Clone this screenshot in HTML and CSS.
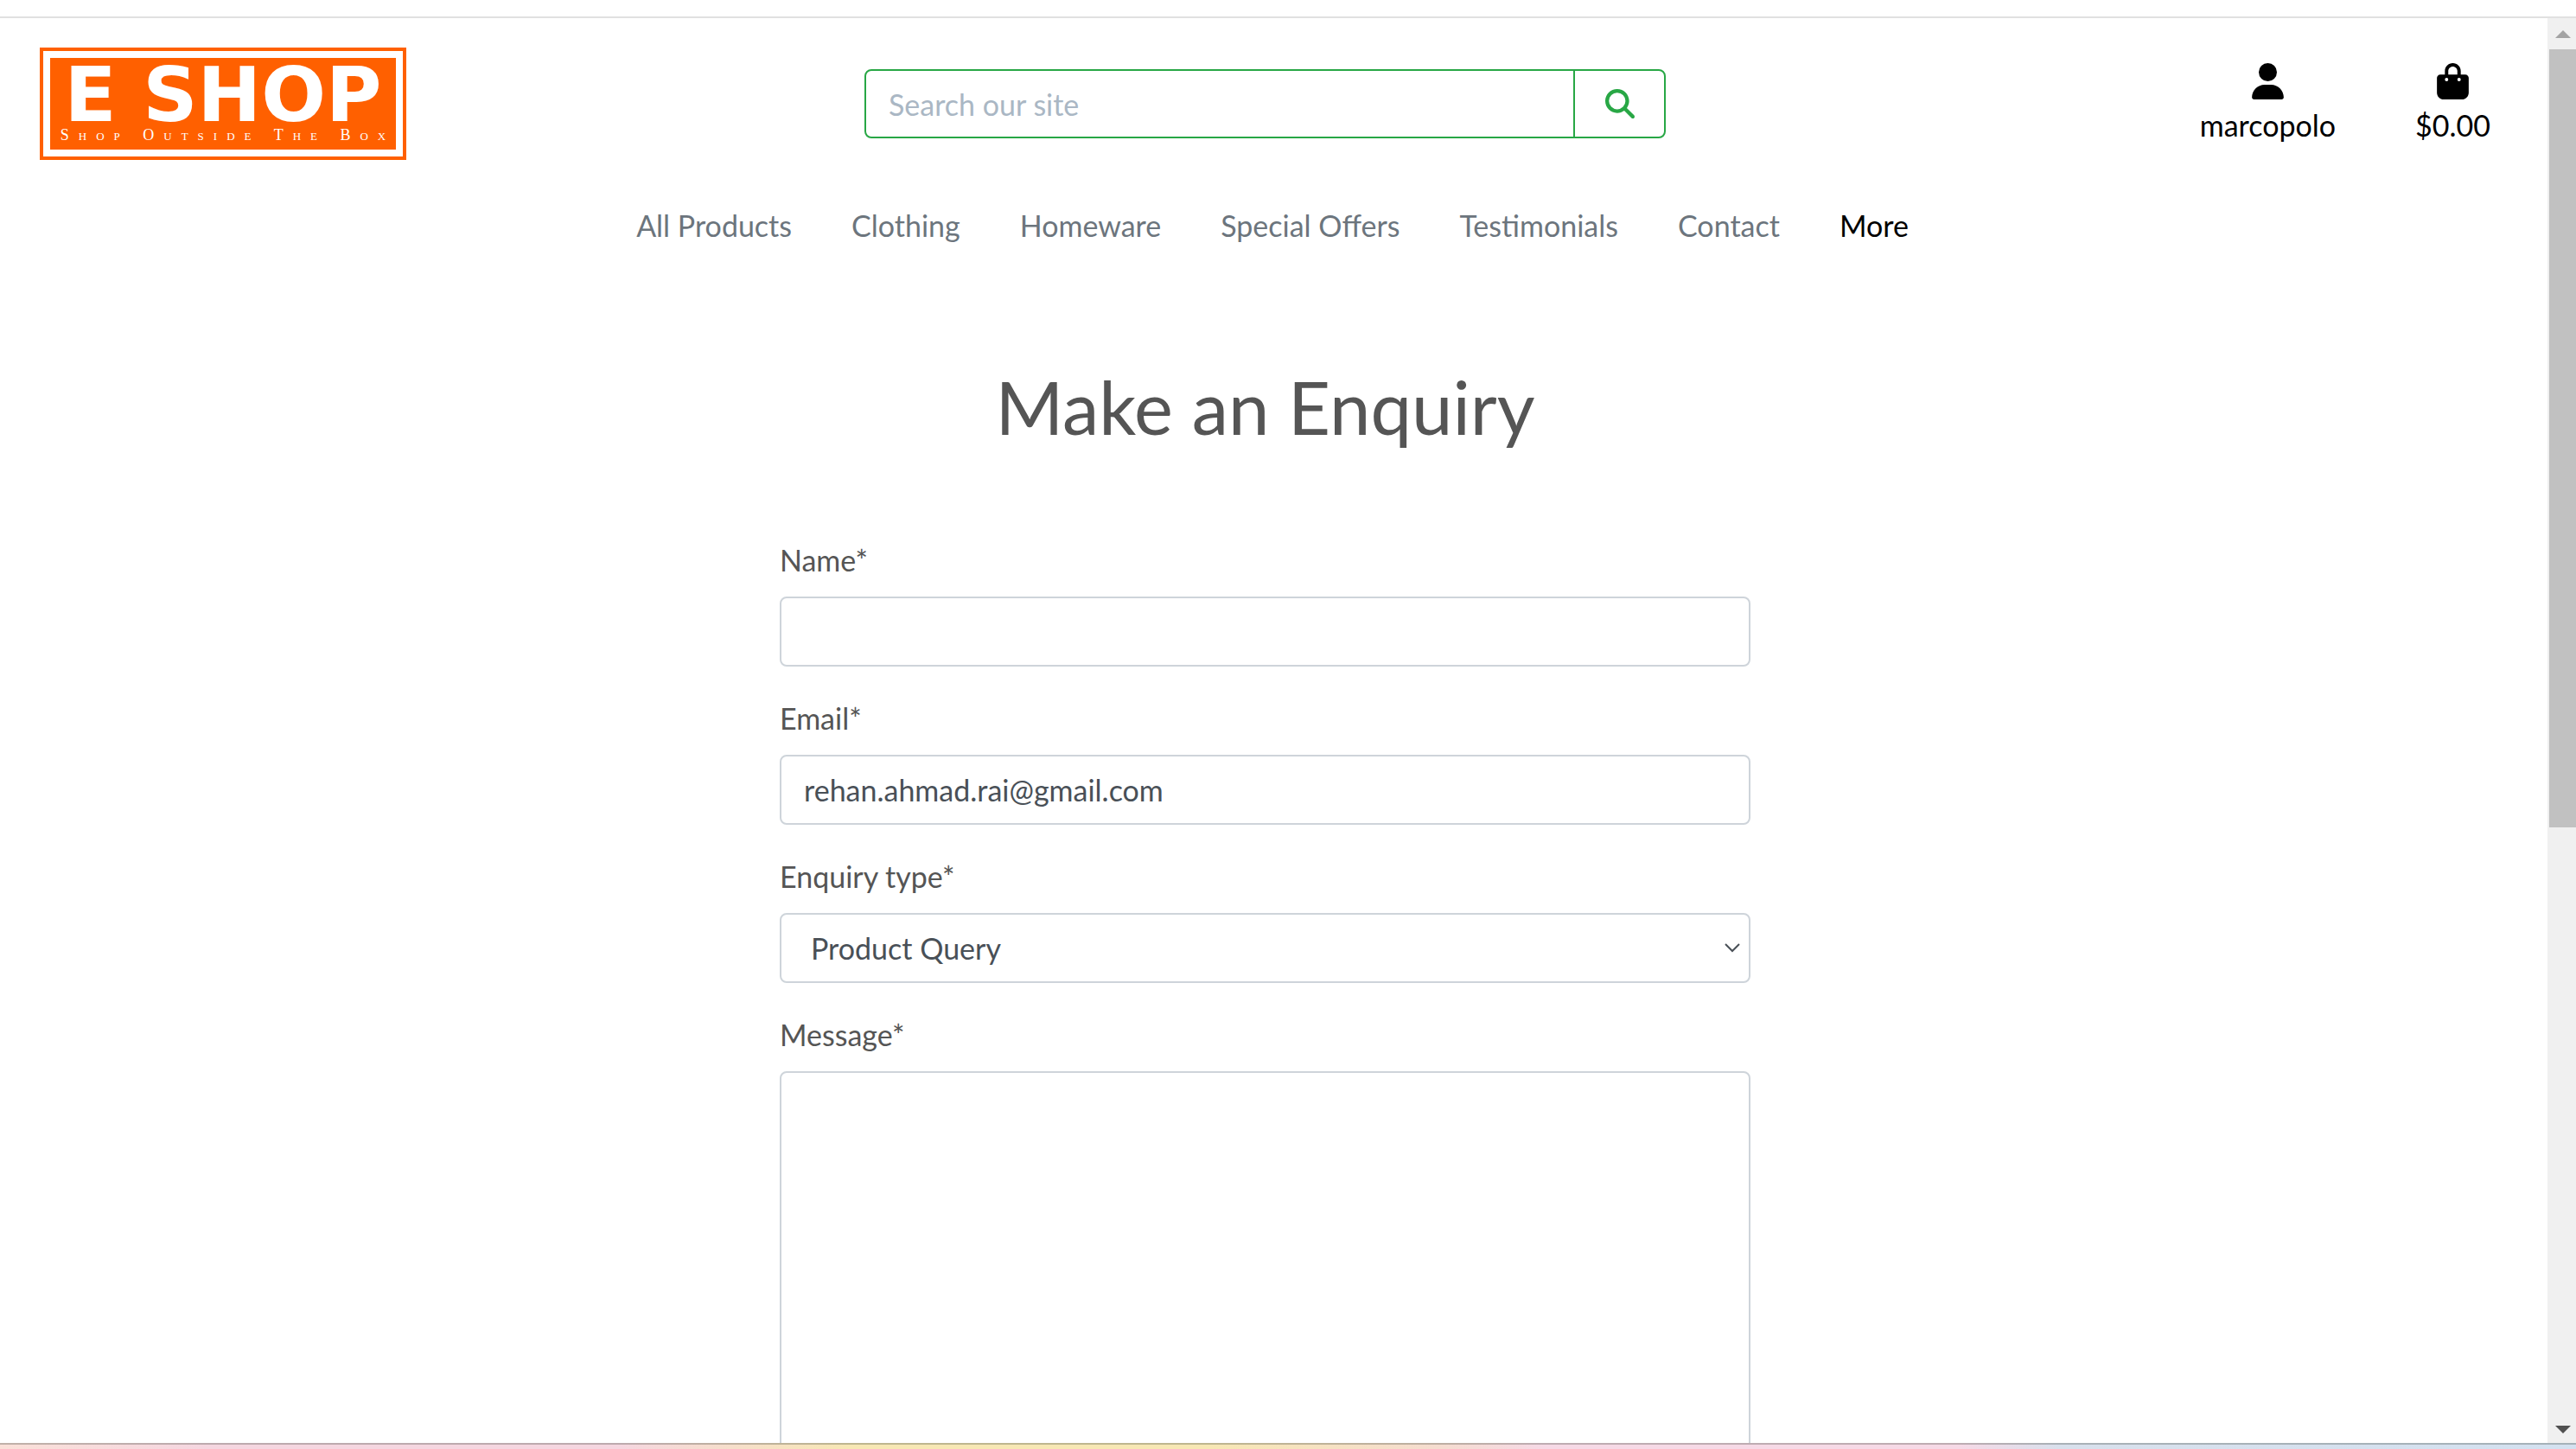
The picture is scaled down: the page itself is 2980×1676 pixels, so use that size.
FILE: index.html
```html
<!DOCTYPE html>
<html lang="en">
<head>
<meta charset="utf-8">
<title>E Shop - Make an Enquiry</title>
<link rel="stylesheet" href="styles.css">
</head>
<body>
<div class="topbar"></div>
<div class="window">
  <div class="page">
    <header class="header">
      <a class="logo" href="#">
        <span class="logo-panel">
          <span class="logo-name">E SHOP</span>
          <span class="logo-tagline">Shop Outside The Box</span>
        </span>
      </a>
      <form class="search" role="search">
        <input class="search-input" type="search" placeholder="Search our site" aria-label="Search our site">
        <button class="search-button" type="button" aria-label="Search">
          <svg class="search-icon" viewBox="0 0 512 512" fill="currentColor"><path d="M416 208c0 45.900-14.900 88.300-40 122.700L502.600 457.400c12.500 12.500 12.500 32.800 0 45.300s-32.800 12.500-45.300 0L330.700 376c-34.400 25.200-76.800 40-122.700 40C93.100 416 0 322.900 0 208S93.100 0 208 0S416 93.100 416 208zM208 352a144 144 0 1 0 0-288 144 144 0 1 0 0 288z"/></svg>
        </button>
      </form>
      <div class="account">
        <a class="account-link" href="#">
          <svg class="account-icon" viewBox="0 0 448 512" fill="currentColor"><path d="M224 256A128 128 0 1 0 224 0a128 128 0 1 0 0 256zm-45.700 48C79.800 304 0 383.800 0 482.300C0 498.700 13.300 512 29.700 512H418.300c16.400 0 29.700-13.300 29.700-29.700C448 383.800 368.200 304 269.700 304H178.300z"/></svg>
          <span>marcopolo</span>
        </a>
        <a class="account-link" href="#">
          <svg class="account-icon" viewBox="0 0 448 512" fill="currentColor"><path d="M160 112c0-35.300 28.700-64 64-64s64 28.700 64 64v48H160V112zm-48 48H48c-26.500 0-48 21.500-48 48V416c0 53 43 96 96 96H352c53 0 96-43 96-96V208c0-26.500-21.500-48-48-48H336V112C336 50.100 285.900 0 224 0S112 50.100 112 112v48zm24 48a24 24 0 1 1 0 48 24 24 0 1 1 0-48zm152 24a24 24 0 1 1 48 0 24 24 0 1 1-48 0z"/></svg>
          <span>$0.00</span>
        </a>
      </div>
    </header>
    <nav class="nav">
      <a href="#">All Products</a>
      <a href="#">Clothing</a>
      <a href="#">Homeware</a>
      <a href="#">Special Offers</a>
      <a href="#">Testimonials</a>
      <a href="#">Contact</a>
      <a class="nav-more" href="#">More</a>
    </nav>
    <main class="main">
      <h1 class="title">Make an Enquiry</h1>
      <form class="form">
        <div class="field">
          <label for="name">Name*</label>
          <input class="control" id="name" type="text">
        </div>
        <div class="field">
          <label for="email">Email*</label>
          <input class="control" id="email" type="email" value="rehan.ahmad.rai@gmail.com">
        </div>
        <div class="field">
          <label for="type">Enquiry type*</label>
          <div class="select">
            <select class="control" id="type"><option>Product Query</option></select>
            <svg class="chevron" viewBox="0 0 18 11" fill="none" stroke="currentColor" stroke-width="2"><path d="M1 1l8 8 8-8"/></svg>
          </div>
        </div>
        <div class="field">
          <label for="message">Message*</label>
          <textarea class="control" id="message" rows="10"></textarea>
        </div>
      </form>
    </main>
  </div>
  <div class="scrollbar" aria-hidden="true">
    <svg class="arrow arrow-up" viewBox="0 0 18 9"><path d="M0 9L9 0l9 9z"/></svg>
    <div class="track"><div class="thumb"></div></div>
    <svg class="arrow arrow-down" viewBox="0 0 18 9"><path d="M0 0l9 9 9-9z"/></svg>
  </div>
</div>
<div class="wallpaper"></div>
</body>
</html>
```
FILE: styles.css
```css
* {
  box-sizing: border-box;
}

body {
  margin: 0;
  height: 100vh;
  display: flex;
  flex-direction: column;
  overflow: hidden;
  background: #fff;
  color: #555;
  font: 34px/51px Lato, sans-serif;
}

a {
  color: inherit;
  text-decoration: none;
}

input,
select,
textarea,
button {
  font: inherit;
}

.topbar {
  flex: none;
  height: 21px;
  border-bottom: 2px solid #e1e1e1;
}

.window {
  flex: 1;
  min-height: 0;
  display: flex;
}

.page {
  flex: 1;
  min-width: 0;
  overflow: hidden;
  padding-right: 20px;
}

/* Header */

.header {
  display: grid;
  grid-template-columns: 1fr minmax(0, 927px) 1fr;
  align-items: center;
  padding: 34px 46px 0;
}

.logo {
  justify-self: start;
  padding: 8px;
  border: 4px solid #ff6000;
}

.logo-panel {
  display: flex;
  flex-direction: column;
  align-items: center;
  width: 400px;
  height: 106px;
  padding-top: 7px;
  background: #ff6000;
  color: #fff;
}

.logo-name {
  font: bold 88px/72px "DejaVu Sans", sans-serif;
  white-space: nowrap;
}

.logo-tagline {
  padding-left: 11px;
  font: 18px/20px "Liberation Serif", serif;
  font-variant: small-caps;
  letter-spacing: 11px;
  white-space: nowrap;
}

.search {
  display: flex;
  height: 80px;
  border: 2px solid #28a745;
  border-radius: 8px;
}

.search-input {
  flex: 1;
  min-width: 0;
  padding: 0 26px;
  border: 0;
  background: none;
  appearance: none;
  color: #495057;
}

.search-input::placeholder {
  color: #aab7c4;
  opacity: 1;
}

.search-button {
  display: flex;
  align-items: center;
  justify-content: center;
  width: 105px;
  padding: 0;
  border: 0;
  border-left: 2px solid #28a745;
  background: none;
  color: #28a745;
}

.search-icon {
  width: 34px;
  height: 34px;
}

.account {
  justify-self: end;
  display: flex;
  gap: 92px;
  padding-top: 3px;
  color: #000;
}

.account-link {
  display: flex;
  flex-direction: column;
  align-items: center;
  gap: 4px;
}

.account-icon {
  width: 37px;
  height: 42px;
}

.nav {
  display: flex;
  justify-content: center;
  gap: 69px;
  padding: 50px 0 0 17px;
  color: #6c757d;
}

.nav-more {
  color: #000;
}

/* Enquiry form */

.main {
  padding-top: 133px;
}

.title {
  margin: 0 0 101px;
  font-size: 85px;
  line-height: 102px;
  font-weight: 400;
  text-align: center;
}

.form {
  width: 1123px;
  max-width: 100%;
  margin: 0 auto;
}

.field {
  display: flex;
  flex-direction: column;
  gap: 17px;
  margin-bottom: 34px;
}

.control {
  display: block;
  width: 100%;
  height: 81px;
  padding: 0 26px;
  border: 2px solid #ced4da;
  border-radius: 8px;
  background: #fff;
  color: #495057;
}

.select {
  position: relative;
}

select.control {
  appearance: none;
  padding: 0 34px;
}

.chevron {
  position: absolute;
  top: 35px;
  right: 12px;
  width: 18px;
  height: 11px;
  color: #495057;
  pointer-events: none;
}

textarea.control {
  height: auto;
  padding: 13px 26px;
  resize: none;
}

/* Scrollbar */

.scrollbar {
  display: flex;
  flex-direction: column;
  align-items: center;
  width: 33px;
  padding: 14px 0 11px;
  background: #f0f0f0;
}

.arrow {
  flex: none;
  width: 18px;
  height: 9px;
  margin-left: 3px;
}

.arrow-up {
  fill: #a3a3a3;
}

.arrow-down {
  fill: #505050;
}

.track {
  flex: 1;
  align-self: stretch;
  margin: 13px 0 13px 2px;
}

.thumb {
  height: 57%;
  background: #c1c1c1;
}

.wallpaper {
  flex: none;
  height: 7px;
  border-top: 2px solid rgba(60, 70, 60, 0.3);
  background: linear-gradient(90deg, #fae0d8, #f5d6e0 8%, #f5d6e0 24%, #f7e7b4 33%, #f7e7b4 47%, #f5dcd0 56%, #f6d9e6 60%, #f6d9e6 76%, #d8e0ec 80%, #d3e1f0);
}
```
